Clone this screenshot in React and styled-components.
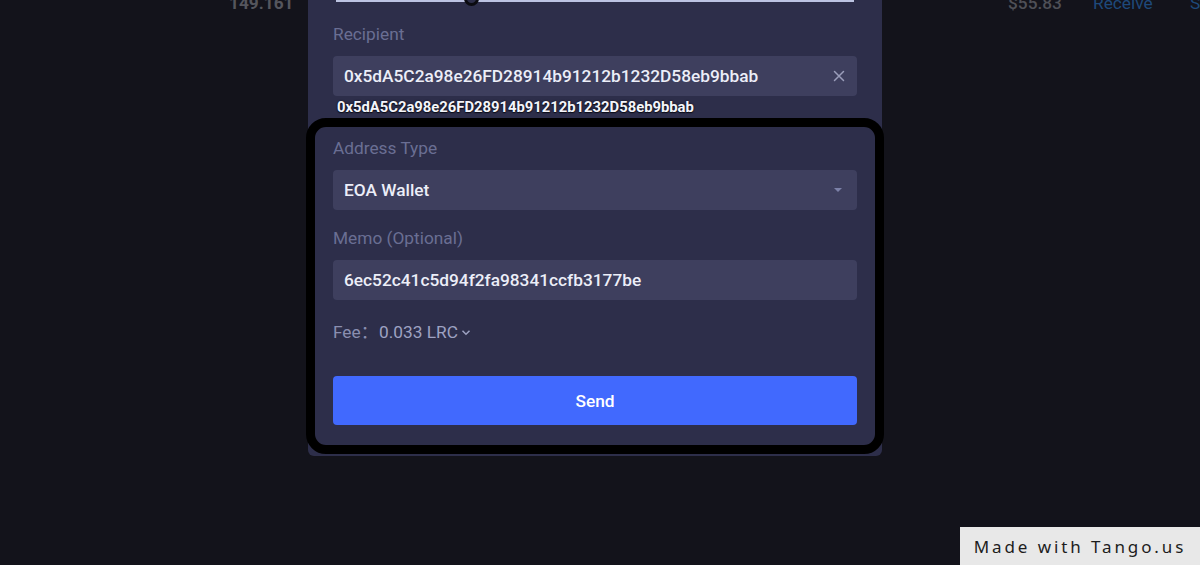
import React from 'react';
import styled, { createGlobalStyle } from 'styled-components';

const Global = createGlobalStyle`
  html, body { margin: 0; padding: 0; }
  body {
    background: #13131b;
    font-family: Roboto, "Liberation Sans", sans-serif;
    overflow: hidden;
  }
`;

const Page = styled.div`
  position: relative;
  width: 1200px;
  height: 565px;
  overflow: hidden;
  background: #13131b;
`;

const TableRow = styled.div`
  display: flex;
  align-items: center;
  height: 24px;
  margin-top: -9px;
  font-size: 17.3px;
  font-weight: 700;
  color: #55565d;
`;

const Cell = styled.span`
  width: ${p => p.w}px;
  text-align: ${p => p.align || 'left'};
  color: ${p => p.color || 'inherit'};
  font-weight: ${p => p.weight || 700};
  flex-shrink: 0;
  white-space: nowrap;
`;

const Modal = styled.div`
  position: absolute;
  top: 0;
  left: 308px;
  width: 574px;
  box-sizing: border-box;
  padding: 0 25px 2px;
  background: #2d2e4a;
  border-radius: 0 0 6px 6px;
`;

const Track = styled.div`
  position: relative;
  height: 3px;
  margin: -1px 3px 0;
  background: #bcc3e2;
`;

const Handle = styled.div`
  position: absolute;
  left: 128px;
  top: -8px;
  width: 9px;
  height: 9px;
  border: 3px solid #0b0b10;
  border-radius: 50%;
  background: #2d2e4a;
`;

const Label = styled.div`
  margin-top: ${p => p.mt || 0}px;
  font-size: 17.3px;
  line-height: 24px;
  color: #6a6e93;
`;

const Field = styled.div`
  display: flex;
  align-items: center;
  height: 40px;
  margin-top: 10px;
  padding: 0 12px 0 11px;
  background: #3e3f5e;
  border-radius: 4px;
  font-size: 17.3px;
  font-weight: 500;
  color: #eceef8;
`;

const FieldText = styled.span`
  flex: 1;
  white-space: nowrap;
`;

const Hint = styled.div`
  margin: 1px 0 0 4px;
  font-size: 14.8px;
  font-weight: 700;
  line-height: 21px;
  color: #f4f5fb;
  white-space: nowrap;
  text-shadow: 0 0 2px #0d0d18, 0 1px 1px #0d0d18;
`;

const Highlight = styled.div`
  margin: 0 -27px;
  border: 9px solid #000;
  border-radius: 20px;
  padding: 9px 18px 20px;
`;

const FeeRow = styled.div`
  display: flex;
  align-items: center;
  margin-top: 20px;
  font-family: Roboto, "Noto Sans CJK SC", sans-serif;
  font-size: 17.3px;
  line-height: 24px;
  color: #8a8eb0;
`;

const FeeValue = styled.span`
  margin-left: 1px;
  color: #9ea2c2;
`;

const SendButton = styled.button`
  display: block;
  width: 100%;
  height: 49px;
  margin-top: 32px;
  border: none;
  border-radius: 4px;
  background: #4169fe;
  color: #ffffff;
  font-family: Roboto, "Liberation Sans", sans-serif;
  font-size: 17.3px;
  font-weight: 500;
`;

const Badge = styled.div`
  position: absolute;
  right: 0;
  bottom: 0;
  width: 240px;
  height: 38px;
  display: flex;
  align-items: center;
  justify-content: center;
  background: #e8e8e8;
  color: #1d1d1d;
  font-family: "Noto Sans", "DejaVu Sans", sans-serif;
  font-size: 17px;
  letter-spacing: 2.9px;
`;

const Clear = () => (
  <svg width="12" height="12" viewBox="0 0 12 12">
    <path d="M1.5 1.5l9 9M10.5 1.5l-9 9" stroke="#9a9dba" strokeWidth="1.5" strokeLinecap="round" />
  </svg>
);

const Caret = () => (
  <svg width="10" height="6" viewBox="0 0 10 6" style={{ marginRight: 2 }}>
    <path d="M1 1h8L5 5z" fill="#7c81a8" />
  </svg>
);

const Chevron = () => (
  <svg width="10" height="7" viewBox="0 0 10 7" style={{ marginLeft: 3 }}>
    <path d="M1.5 1.8L5 5.2l3.5-3.4" stroke="#9ea2c2" strokeWidth="1.5" fill="none" />
  </svg>
);

export default function App() {
  return (
    <Page>
      <Global />
      <TableRow>
        <Cell w={229} />
        <Cell w={61} align="right">149.161</Cell>
        <Cell w={718} />
        <Cell w={58} weight={500} color="#4f5057">$55.83</Cell>
        <Cell w={27} />
        <Cell w={70} weight={400} color="#1e497a">Receive</Cell>
        <Cell w={27} />
        <Cell w={20} weight={400} color="#1e497a">S</Cell>
      </TableRow>

      <Modal>
        <Track>
          <Handle />
        </Track>
        <Label mt={20}>Recipient</Label>
        <Field>
          <FieldText>0x5dA5C2a98e26FD28914b91212b1232D58eb9bbab</FieldText>
          <Clear />
        </Field>
        <Hint>0x5dA5C2a98e26FD28914b91212b1232D58eb9bbab</Hint>

        <Highlight>
          <Label>Address Type</Label>
          <Field>
            <FieldText>EOA Wallet</FieldText>
            <Caret />
          </Field>
          <Label mt={16}>Memo (Optional)</Label>
          <Field>
            <FieldText>6ec52c41c5d94f2fa98341ccfb3177be</FieldText>
          </Field>
          <FeeRow>
            Fee：<FeeValue>0.033 LRC</FeeValue>
            <Chevron />
          </FeeRow>
          <SendButton>Send</SendButton>
        </Highlight>
      </Modal>

      <Badge>Made with Tango.us</Badge>
    </Page>
  );
}
